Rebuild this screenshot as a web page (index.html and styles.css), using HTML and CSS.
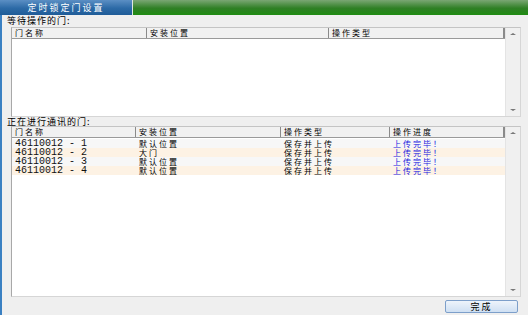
FILE: index.html
```html
<!DOCTYPE html>
<html lang="zh-CN">
<head>
  <meta charset="UTF-8">
  <title>定时锁定门设置</title>
  <link rel="stylesheet" href="styles.css">
</head>
<body>
  <div class="tabbar">
    <div class="tab">定时锁定门设置</div>
    <div class="tab-fill"></div>
  </div>

  <div class="panel">
    <div class="label first">等待操作的门:</div>
    <div class="listbox waiting">
      <div class="list">
        <div class="head cols-wait">
          <div class="hcell">门名称</div>
          <div class="hcell">安装位置</div>
          <div class="hcell last">操作类型</div>
        </div>
      </div>
      <div class="scroll">
        <span class="arrow up"></span>
        <span class="arrow down"></span>
      </div>
    </div>

    <div class="label second">正在进行通讯的门:</div>
    <div class="listbox running">
      <div class="list">
        <div class="head cols-run">
          <div class="hcell">门名称</div>
          <div class="hcell">安装位置</div>
          <div class="hcell">操作类型</div>
          <div class="hcell last">操作进度</div>
        </div>
        <div class="rows">
          <div class="row cols-run">
            <div class="cell num">46110012 - 1</div>
            <div class="cell">默认位置</div>
            <div class="cell">保存并上传</div>
            <div class="cell done">上传完毕！</div>
          </div>
          <div class="row cols-run alt">
            <div class="cell num">46110012 - 2</div>
            <div class="cell">大门</div>
            <div class="cell">保存并上传</div>
            <div class="cell done">上传完毕！</div>
          </div>
          <div class="row cols-run">
            <div class="cell num">46110012 - 3</div>
            <div class="cell">默认位置</div>
            <div class="cell">保存并上传</div>
            <div class="cell done">上传完毕！</div>
          </div>
          <div class="row cols-run alt">
            <div class="cell num">46110012 - 4</div>
            <div class="cell">默认位置</div>
            <div class="cell">保存并上传</div>
            <div class="cell done">上传完毕！</div>
          </div>
        </div>
      </div>
      <div class="scroll">
        <span class="arrow up"></span>
        <span class="arrow down"></span>
      </div>
    </div>

    <div class="footer">
      <button class="btn-finish">完成</button>
    </div>
  </div>
</body>
</html>
```

FILE: styles.css
```css
body {
  margin: 0;
  width: 528px;
  height: 315px;
  overflow: hidden;
  background: #efefef;
  font-family: "Noto Sans CJK SC", "DejaVu Sans", sans-serif;
  font-size: 8px;
  color: #000;
}

.tabbar {
  display: flex;
  height: 15px;
}

.tab {
  width: 132px;
  border-right: 1px solid #dfe8e0;
  background: linear-gradient(#5b8fc4, #2c6aa6 55%, #1f5c98);
  color: #fff;
  font-size: 9px;
  letter-spacing: 2px;
  line-height: 15px;
  text-align: center;
}

.tab-fill {
  flex: 1;
  background: linear-gradient(#7aa673, #2f7f25 55%, #1f8c12);
}

.panel {
  height: 300px;
  border-left: 2px solid #3a80c2;
  padding-left: 5px;
  padding-right: 7px;
}

.label {
  font-size: 9px;
  letter-spacing: 1px;
  white-space: nowrap;
}

.label.first {
  height: 11px;
  line-height: 11px;
  margin-bottom: 1px;
}

.label.second {
  height: 9px;
  line-height: 9px;
}

.listbox {
  display: flex;
  margin-left: 4px;
  background: #fff;
  border: 1px solid #d6d6d6;
  border-left-color: #a8a8a8;
  border-top-color: #c4c4c4;
}

.listbox.waiting {
  height: 88px;
}

.listbox.running {
  height: 169px;
}

.list {
  flex: 1;
}

.cols-wait {
  display: grid;
  grid-template-columns: 135px 182px 1fr;
}

.cols-run {
  display: grid;
  grid-template-columns: 124px 145px 109px 1fr;
}

.head {
  height: 10px;
  background: #f1f1f1;
  border-bottom: 1px solid #9a9a9a;
}

.hcell {
  height: 10px;
  line-height: 10px;
  padding-left: 3px;
  letter-spacing: 2px;
  border-right: 1px solid #8a8a8a;
  white-space: nowrap;
  overflow: hidden;
}

.hcell.last {
  border-right: 2px solid #8a8a8a;
}

.rows {
  padding-top: 1px;
}

.row {
  height: 9px;
  background: #f7f7f7;
}

.row.alt {
  background: #fdf2e4;
}

.cell {
  height: 9px;
  line-height: 9px;
  padding-left: 3px;
  letter-spacing: 2px;
  white-space: nowrap;
  overflow: hidden;
}

.cell.num {
  font-family: "Liberation Mono", monospace;
  font-size: 10px;
  letter-spacing: 0;
  color: #111;
}

.cell.done {
  color: #2121e0;
}

.scroll {
  width: 14px;
  background: #f0f0f0;
  border-left: 1px solid #e4e4e4;
  display: flex;
  flex-direction: column;
  justify-content: space-between;
  align-items: center;
  padding: 5px 0;
}

.arrow {
  width: 0;
  height: 0;
  border-left: 3px solid transparent;
  border-right: 3px solid transparent;
}

.arrow.up {
  border-bottom: 2px solid #777;
}

.arrow.down {
  border-top: 2px solid #777;
}

.footer {
  display: flex;
  justify-content: flex-end;
  padding-top: 3px;
  padding-right: 3px;
}

.btn-finish {
  width: 73px;
  height: 13px;
  padding: 0;
  border: 1px solid #7d9fca;
  border-radius: 2px;
  background: linear-gradient(#eef4fb, #cfe0f3);
  font-family: "Noto Sans CJK SC", sans-serif;
  font-size: 9px;
  letter-spacing: 2px;
  line-height: 11px;
  color: #000;
}
```
